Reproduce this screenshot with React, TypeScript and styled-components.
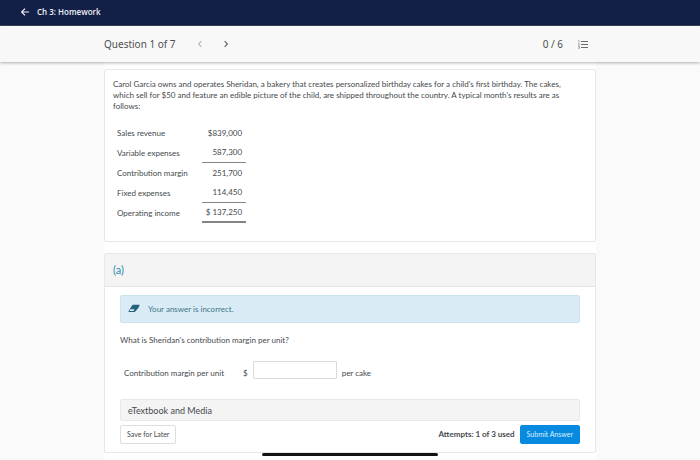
import React from "react";
import styled, { createGlobalStyle } from "styled-components";

const GlobalStyle = createGlobalStyle`
  *, *::before, *::after { box-sizing: border-box; }
  body {
    margin: 0;
    background: #fafafa;
    color: #45494d;
    font-family: Lato, "Liberation Sans", sans-serif;
    font-size: 8px;
    line-height: 11px;
  }
  button, input { font: inherit; color: inherit; }
`;

const Page = styled.div`
  display: flex;
  flex-direction: column;
  min-height: 100vh;
`;

const TopBar = styled.header`
  display: flex;
  align-items: center;
  height: 26px;
  padding: 0 20px 2px;
  background: #131f47;
  border-bottom: 1px solid #3b4463;
`;

const BackLink = styled.a`
  display: flex;
  align-items: center;
  gap: 7px;
  color: #eef0f5;
  font: 600 8px/12px "Open Sans", "Noto Sans", sans-serif;
  text-decoration: none;
`;

const QuestionBar = styled.nav`
  position: relative;
  padding: 0 16px;
  background: #f8f8f8;
  box-shadow: 0 1px 3px rgba(0, 0, 0, 0.3);
`;

const QuestionBarInner = styled.div`
  display: flex;
  align-items: center;
  max-width: 492px;
  height: 36px;
  margin: 0 auto;
  color: #505050;
  font: 400 10px/14px "Noto Sans", "Open Sans", sans-serif;
`;

const QuestionTitle = styled.h1`
  margin: 0 16px 0 0;
  font: inherit;
`;

const IconButton = styled.button<{ $muted?: boolean }>`
  display: flex;
  align-items: center;
  justify-content: center;
  width: 16px;
  height: 16px;
  padding: 0;
  border: 0;
  background: none;
  color: ${(p) => (p.$muted ? "#b4b4b4" : "#5c5c5c")};
`;

const Pager = styled.div`
  display: flex;
  gap: 10px;
`;

const Score = styled.div`
  display: flex;
  align-items: center;
  gap: 12px;
  margin-left: auto;
  padding-right: 5px;
`;

const Content = styled.main`
  flex: 1;
  display: flex;
  flex-direction: column;
  gap: 11px;
  width: 100%;
  max-width: 492px;
  margin: 0 auto;
  padding: 7px 0 8px;
  background: #fff;
`;

const Card = styled.section`
  border: 1px solid #e8e8e8;
  border-radius: 2px;
  background: #fff;
`;

const Problem = styled(Card)`
  padding: 9px 24px 18px 8px;
`;

const Paragraph = styled.p`
  margin: 0;
`;

const Results = styled.table`
  margin: 11px 0 0;
  border-spacing: 0;
`;

const Label = styled.th`
  padding: 0 14px 0 4px;
  font-weight: 400;
  text-align: left;
`;

const Amount = styled.td<{ $rule?: "single" | "double" }>`
  height: 20px;
  padding: 0 4px;
  text-align: right;
  border-bottom: ${(p) =>
    p.$rule === "double" ? "2px solid #858585" : p.$rule === "single" ? "1px solid #858585" : "0"};
`;

const PartHeader = styled.h2`
  margin: 0;
  padding: 9px 8px;
  border-bottom: 1px solid #e4e4e4;
  background: #f4f4f4;
  color: #2c89b2;
  font-size: 11px;
  font-weight: 400;
  line-height: 14px;
`;

const PartBody = styled.div`
  padding: 8px 15px;
`;

const Alert = styled.div`
  display: flex;
  align-items: center;
  gap: 8px;
  height: 28px;
  padding: 0 7px;
  border: 1px solid #cce4ee;
  border-radius: 2px;
  background: #d9ebf5;
  color: #417489;
`;

const Prompt = styled(Paragraph)`
  margin-top: 12px;
`;

const AnswerRow = styled.div`
  display: flex;
  align-items: center;
  gap: 5px;
  margin: 15px 0 20px;
  padding-left: 4px;
`;

const AnswerLabel = styled.label`
  margin: 7px 14px 0 0;
`;

const Unit = styled.span`
  margin-top: 7px;
`;

const AnswerInput = styled.input`
  width: 84px;
  height: 18px;
  padding: 0 4px;
  border: 1px solid #dadada;
  border-radius: 1px;
  background: #fff;
`;

const MediaButton = styled.button`
  display: block;
  width: 100%;
  height: 22px;
  padding: 0 7px;
  border: 1px solid #e8e8e8;
  border-radius: 2px;
  background: #f4f4f4;
  font-size: 9px;
  text-align: left;
`;

const Actions = styled.div`
  display: flex;
  align-items: center;
  justify-content: space-between;
  margin-top: 4px;
`;

const Submission = styled.div`
  display: flex;
  align-items: center;
  gap: 5px;
`;

const ActionButton = styled.button<{ $primary?: boolean }>`
  height: 19px;
  padding: 0 6px;
  border: 1px solid ${(p) => (p.$primary ? "#088ae0" : "#dedede")};
  border-radius: 2px;
  background: ${(p) => (p.$primary ? "#088ae0" : "#fff")};
  color: ${(p) => (p.$primary ? "#d9efff" : "#45494d")};
  font-size: 7px;
  line-height: 9px;
`;

const HomeIndicator = styled.div`
  position: fixed;
  bottom: 4px;
  left: 50%;
  width: 176px;
  height: 3px;
  margin-left: -88px;
  border-radius: 2px;
  background: #101214;
`;

const BackArrow = () => (
  <svg width="10" height="10" viewBox="0 0 10 10" fill="none" stroke="currentColor" strokeWidth="1.2" aria-hidden="true">
    <path d="M9 5H1.6M5 1.6 1.6 5 5 8.4" />
  </svg>
);

const Chevron = ({ back = false }: { back?: boolean }) => (
  <svg width="8" height="8" viewBox="0 0 8 8" fill="none" stroke="currentColor" strokeWidth="1.1" aria-hidden="true">
    <path d={back ? "M5.3 1.2 2.6 4l2.7 2.8" : "M2.7 1.2 5.4 4 2.7 6.8"} />
  </svg>
);

const ListIcon = () => (
  <svg width="10" height="9" viewBox="0 0 10 9" fill="none" stroke="currentColor" aria-hidden="true">
    <path d="M3 1.5h7M3 4.5h7M3 7.5h7" strokeWidth=".9" />
    <path d="M.2.6h.9v1.8M.2 3.6h1.2L.3 5.3h1.2M.2 6.5h1.2v2H.2M.6 7.5h.8" strokeWidth=".5" />
  </svg>
);

const Eraser = () => (
  <svg width="12" height="10" viewBox="0 0 12 10" aria-hidden="true">
    <path d="M5 .8h6.2q.6 0 .3.7L10.4 4 7.2 7.4q-.4.5-.9.5H.8q-.7 0-.3-.7L4.2 1.2Q4.5.8 5 .8Z" fill="#28617f" />
    <path d="M2.4 5.3h4L5.6 7.1H1.4Z" fill="#d9ebf5" />
  </svg>
);

const results: { label: string; amount: string; rule?: "single" | "double" }[] = [
  { label: "Sales revenue", amount: "$839,000" },
  { label: "Variable expenses", amount: "587,300", rule: "single" },
  { label: "Contribution margin", amount: "251,700" },
  { label: "Fixed expenses", amount: "114,450", rule: "single" },
  { label: "Operating income", amount: "$ 137,250", rule: "double" },
];

export default function App() {
  return (
    <>
      <GlobalStyle />
      <Page>
        <TopBar>
          <BackLink href="#homework">
            <BackArrow />
            Ch 3: Homework
          </BackLink>
        </TopBar>
        <QuestionBar aria-label="Questions">
          <QuestionBarInner>
            <QuestionTitle>Question 1 of 7</QuestionTitle>
            <Pager>
              <IconButton type="button" $muted disabled aria-label="Previous question">
                <Chevron back />
              </IconButton>
              <IconButton type="button" aria-label="Next question">
                <Chevron />
              </IconButton>
            </Pager>
            <Score>
              <span>0 / 6</span>
              <IconButton type="button" aria-label="Question list">
                <ListIcon />
              </IconButton>
            </Score>
          </QuestionBarInner>
        </QuestionBar>
        <Content>
          <Problem>
            <Paragraph>
              Carol Garcia owns and operates Sheridan, a bakery that creates personalized birthday cakes for a child's
              first birthday. The cakes, which sell for $50 and feature an edible picture of the child, are shipped
              throughout the country. A typical month's results are as follows:
            </Paragraph>
            <Results>
              <tbody>
                {results.map((row) => (
                  <tr key={row.label}>
                    <Label scope="row">{row.label}</Label>
                    <Amount $rule={row.rule}>{row.amount}</Amount>
                  </tr>
                ))}
              </tbody>
            </Results>
          </Problem>
          <Card>
            <PartHeader>(a)</PartHeader>
            <PartBody>
              <Alert role="status">
                <Eraser />
                Your answer is incorrect.
              </Alert>
              <Prompt>What is Sheridan's contribution margin per unit?</Prompt>
              <AnswerRow>
                <AnswerLabel htmlFor="margin-per-unit">Contribution margin per unit</AnswerLabel>
                <Unit>$</Unit>
                <AnswerInput id="margin-per-unit" type="text" />
                <Unit>per cake</Unit>
              </AnswerRow>
              <MediaButton type="button">eTextbook and Media</MediaButton>
              <Actions>
                <ActionButton type="button">Save for Later</ActionButton>
                <Submission>
                  <strong>Attempts: 1 of 3 used</strong>
                  <ActionButton type="button" $primary>
                    Submit Answer
                  </ActionButton>
                </Submission>
              </Actions>
            </PartBody>
          </Card>
        </Content>
      </Page>
      <HomeIndicator />
    </>
  );
}
